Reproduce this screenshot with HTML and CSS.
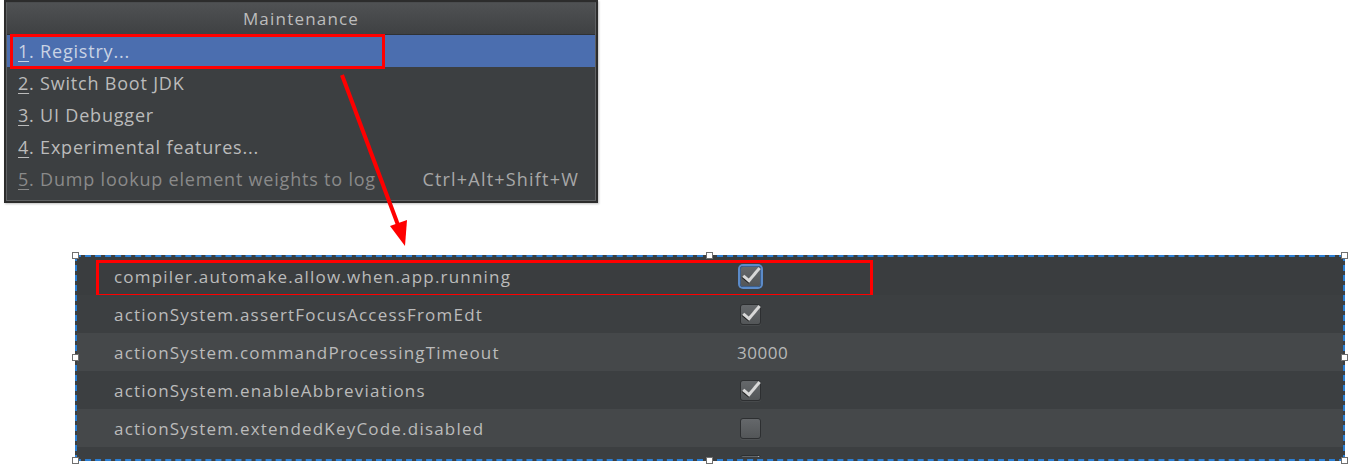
FILE: index.html
```html
<!DOCTYPE html>
<html>
<head>
<meta charset="utf-8">
<link rel="stylesheet" href="styles.css">
</head>
<body>
<div class="page">
  <div class="popup">
    <div class="popup-inner">
      <div class="popup-title">Maintenance</div>
      <div class="menu-row selected"><span class="label"><u>1</u>. Registry...</span><span class="mark mark-registry"></span></div>
      <div class="menu-row"><span class="label"><u>2</u>. Switch Boot JDK</span></div>
      <div class="menu-row"><span class="label"><u>3</u>. UI Debugger</span></div>
      <div class="menu-row"><span class="label"><u>4</u>. Experimental features...</span></div>
      <div class="menu-row disabled"><span class="label clip"><u>5</u>. Dump lookup element weights to log</span><span class="shortcut">Ctrl+Alt+Shift+W</span></div>
    </div>
  </div>

  <div class="registry">
    <div class="reg-row r-focus"><span class="key">compiler.automake.allow.when.app.running</span><span class="val"><span class="cb checked focus"></span></span><span class="mark mark-reg"></span></div>
    <div class="reg-row r-dark"><span class="key">actionSystem.assertFocusAccessFromEdt</span><span class="val"><span class="cb checked"></span></span></div>
    <div class="reg-row r-light"><span class="key">actionSystem.commandProcessingTimeout</span><span class="val num">30000</span></div>
    <div class="reg-row r-dark"><span class="key">actionSystem.enableAbbreviations</span><span class="val"><span class="cb checked"></span></span></div>
    <div class="reg-row r-light"><span class="key">actionSystem.extendedKeyCode.disabled</span><span class="val"><span class="cb"></span></span></div>
    <div class="reg-row r-dark r-partial"><span class="key"></span><span class="val"><span class="cb checked peek"></span></span></div>
    <span class="handle h-tl"></span><span class="handle h-tm"></span><span class="handle h-tr"></span>
    <span class="handle h-ml"></span><span class="handle h-mr"></span>
    <span class="handle h-bl"></span><span class="handle h-bm"></span><span class="handle h-br"></span>
  </div>

  <svg class="arrow" width="1353" height="464" viewBox="0 0 1353 464">
    <line x1="342" y1="75" x2="398" y2="225" stroke="#ff0000" stroke-width="4"/>
    <polygon points="405,246 390,226 407,220" fill="#ff0000"/>
  </svg>
</div>
</body>
</html>
```
FILE: styles.css
```css
* { box-sizing: border-box; }
html, body { margin: 0; padding: 0; background: #ffffff; }
body { width: 1353px; height: 464px; overflow: hidden; font-family: "Open Sans", "Noto Sans", sans-serif; }

.page { position: relative; width: 1353px; height: 464px; display: flex; flex-direction: column; }

.popup {
  margin-left: 4px;
  width: 594px;
  height: 203px;
  border: 2px solid #2c2c2c;
  background: #3c3f41;
  box-shadow: 1px 1px 2px rgba(0,0,0,0.25);
}
.popup-inner {
  height: 100%;
  border: 1px solid #5f6163;
  border-top-color: #4a4c4e;
  display: flex;
  flex-direction: column;
}
.popup-title {
  height: 32px;
  display: flex;
  align-items: center;
  justify-content: center;
  color: #bdbdbd;
  font-size: 17px;
  letter-spacing: 1.2px;
  background: linear-gradient(#4f5153, #3f4143);
  border-bottom: 1px solid #2f3133;
}
.menu-row {
  position: relative;
  height: 32px;
  display: flex;
  align-items: center;
  justify-content: space-between;
  padding-left: 11px;
  padding-right: 16px;
  color: #bbbbbb;
  font-size: 18px;
  letter-spacing: 0.8px;
  white-space: nowrap;
}
.menu-row u { text-decoration-thickness: 1px; text-underline-offset: 3px; }
.menu-row.selected { background: #4b6eaf; color: #c9d3e4; }
.menu-row.disabled { color: #8a8a8a; }
.menu-row .label { overflow: hidden; }
.menu-row .label.clip { max-width: 371px; }
.shortcut { color: #a8a8a8; font-size: 18px; letter-spacing: 1.2px; }

.mark { position: absolute; border: 3px solid #ff0000; pointer-events: none; }
.mark-registry { left: 3px; top: -1px; width: 375px; height: 35px; }
.mark-reg { left: 19px; top: 3px; width: 777px; height: 37px; }

.registry {
  position: relative;
  margin-left: 75px;
  margin-top: 52px;
  width: 1270px;
  height: 206px;
  border: 2px dashed #2b7fd4;
  background: #3c3f41;
  overflow: visible;
}
.reg-row {
  position: relative;
  height: 38px;
  display: flex;
  align-items: center;
  color: #bbbbbb;
  font-size: 17px;
  letter-spacing: 1.2px;
}
.reg-row.r-partial { height: 10px; overflow: hidden; align-items: flex-start; }
.r-focus { background: #3a3d3f; }
.r-dark { background: #3c3f41; }
.r-light { background: #45484a; }
.key { width: 660px; padding-left: 37px; white-space: nowrap; }
.val { display: flex; align-items: center; padding-left: 3px; }
.num { padding-left: 0; letter-spacing: 0.5px; color: #b8b8b8; }

.cb {
  position: relative;
  width: 21px;
  height: 21px;
  border-radius: 3px;
  background: linear-gradient(#65686b, #535658);
  border: 1px solid #2d2f31;
  box-shadow: 0 1px 0 rgba(255,255,255,0.06);
}
.cb.focus { box-shadow: 0 0 0 2px #5b8bc9; border-color: #3d5f8c; }
.cb.checked::after {
  content: "";
  position: absolute;
  left: 6px;
  top: -3px;
  width: 6px;
  height: 15px;
  border-right: 3px solid #d8d8d8;
  border-bottom: 3px solid #d8d8d8;
  transform: rotate(40deg);
  filter: drop-shadow(0 1px 0 #1e1e1e);
}
.cb.peek { margin-top: 8px; }

.handle {
  position: absolute;
  width: 7px;
  height: 7px;
  background: #ffffff;
  border: 1px solid #707070;
}
.h-tl { left: -5px; top: -5px; }
.h-tm { left: 629px; top: -5px; }
.h-tr { right: -5px; top: -5px; }
.h-ml { left: -5px; top: 97px; }
.h-mr { right: -5px; top: 97px; }
.h-bl { left: -5px; bottom: -5px; }
.h-bm { left: 629px; bottom: -5px; }
.h-br { right: -5px; bottom: -5px; }

.arrow { position: absolute; left: 0; top: 0; pointer-events: none; }
```
